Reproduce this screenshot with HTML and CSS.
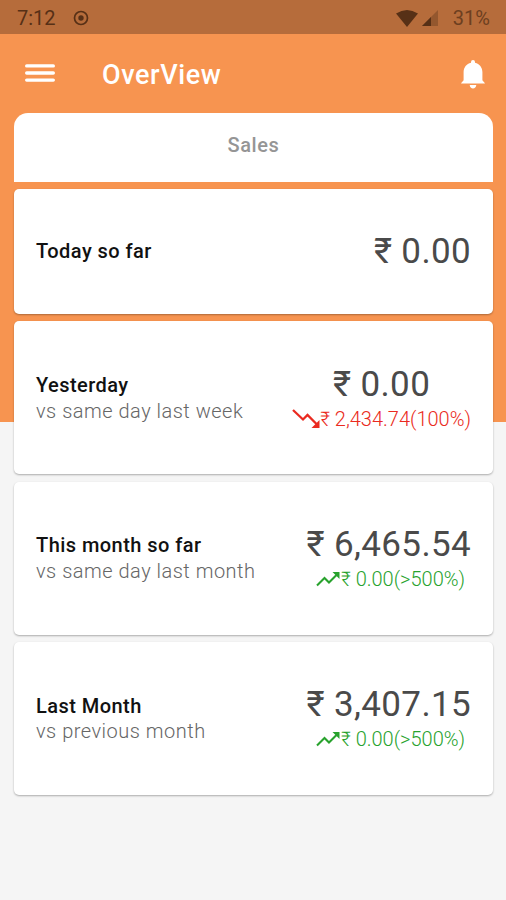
FILE: index.html
```
<!DOCTYPE html>
<html lang="en">
<head>
<meta charset="utf-8">
<title>OverView</title>
<link rel="stylesheet" href="styles.css">
</head>
<body>
<div class="screen">
  <div class="status">
    <span class="clock">7:12</span>
    <svg class="record" width="16" height="16" viewBox="0 0 16 16"><circle cx="8" cy="8" r="6.500" fill="none" stroke="currentColor" stroke-width="1.700"/><circle cx="8" cy="8" r="2.700" fill="currentColor"/></svg>
    <svg class="wifi" width="22" height="17" viewBox="0 0 22 17"><path d="M0 3.600Q11-3.400 22 3.600L11 17Z" fill="currentColor"/></svg>
    <svg class="signal" width="16" height="16" viewBox="0 0 16 16"><path d="M0 16 16 0V16Z" fill="currentColor" opacity=".35"/><path d="M0 16 9 7V16Z" fill="currentColor"/></svg>
    <span class="battery">31%</span>
  </div>
  <header class="bar">
    <svg class="menu" width="30" height="18" viewBox="0 0 30 18"><path d="M1.700 1.900H28.300M1.700 9H28.300M1.700 16.100H28.300" stroke="#fff" stroke-width="3.400" stroke-linecap="round"/></svg>
    <h1 class="title">OverView</h1>
    <svg class="bell" width="24" height="29" viewBox="0 0 24 29"><path d="M12 0a2 2 0 0 1 2 2v.7c4.500 1 7.400 4.800 7.400 9.300v8c0 1.200 2 1.900 2.600 3.500H0C.6 21.900 2.600 21.200 2.600 20V12c0-4.500 2.900-8.300 7.400-9.300V2a2 2 0 0 1 2-2ZM8.700 25h6.600c-.2 2.100-1.500 3.400-3.300 3.400S8.900 27.100 8.700 25Z" fill="#fff"/></svg>
  </header>
  <main class="content">
    <div class="tab">Sales</div>
    <section class="card short">
      <div class="label"><h2>Today so far</h2></div>
      <div class="figures"><div class="amount">₹ 0.00</div></div>
    </section>
    <section class="card">
      <div class="label"><h2>Yesterday</h2><p>vs same day last week</p></div>
      <div class="figures"><div class="amount">₹ 0.00</div>
        <div class="change down"><svg width="28" height="20" viewBox="0 0 28 20"><path d="M1 1 11 10.500 15.500 6 25 15.500" fill="none" stroke="currentColor" stroke-width="2.300"/><path d="M27.500 11V19H19.500Z" fill="currentColor"/></svg><span>₹ 2,434.74(100%)</span></div></div>
    </section>
    <section class="card">
      <div class="label"><h2>This month so far</h2><p>vs same day last month</p></div>
      <div class="figures"><div class="amount">₹ 6,465.54</div>
        <div class="change up"><svg width="24" height="15" viewBox="0 0 24 15"><path d="M1 13.500 8.500 6 13 10.500 21 2.500" fill="none" stroke="currentColor" stroke-width="2.100"/><path d="M16.500 0H23.500V7Z" fill="currentColor"/></svg><span>₹ 0.00(&gt;500%)</span></div></div>
    </section>
    <section class="card">
      <div class="label"><h2>Last Month</h2><p>vs previous month</p></div>
      <div class="figures"><div class="amount">₹ 3,407.15</div>
        <div class="change up"><svg width="24" height="15" viewBox="0 0 24 15"><path d="M1 13.500 8.500 6 13 10.500 21 2.500" fill="none" stroke="currentColor" stroke-width="2.100"/><path d="M16.500 0H23.500V7Z" fill="currentColor"/></svg><span>₹ 0.00(&gt;500%)</span></div></div>
    </section>
  </main>
</div>
</body>
</html>
```
FILE: styles.css
```
* { box-sizing: border-box; }
body {
  margin: 0;
  background: #f5f5f5;
  font-family: Roboto, "Liberation Sans", "DejaVu Sans", sans-serif;
}
.screen {
  height: 900px;
  background: linear-gradient(#f79450 422px, #f5f5f5 422px);
}
.status {
  display: flex;
  align-items: center;
  height: 34px;
  padding: 2px 16px 0 17px;
  background: #b66c3b;
  color: #573016;
  font-size: 20px;
}
.record { margin-left: 17px; }
.wifi { margin-left: auto; }
.signal { margin-left: 4px; }
.battery { margin-left: 15px; color: #6d3f20; }
.bar {
  display: flex;
  align-items: center;
  height: 79px;
  padding: 0 21px 0 25px;
}
.menu { margin-bottom: 2px; }
.title {
  margin: 3px 0 0 47px;
  color: #fff;
  font-size: 27px;
  font-weight: 500;
  letter-spacing: 0.6px;
}
.bell { margin: 2px 0 0 auto; }
.content {
  display: flex;
  flex-direction: column;
  gap: 7.300px;
  padding: 0 13px 0 14px;
}
.tab {
  height: 68.700px;
  padding-top: 20px;
  border-radius: 14px 14px 0 0;
  background: #fff;
  color: #959595;
  font-size: 20px;
  font-weight: 500;
  letter-spacing: 0.6px;
  line-height: 24px;
  text-align: center;
}
.card {
  display: flex;
  align-items: center;
  justify-content: space-between;
  height: 153px;
  padding: 0 22px;
  border-radius: 5px;
  background: #fff;
  box-shadow: 0 1px 2px rgba(0, 0, 0, 0.3);
}
.short { height: 125px; }
.label h2 {
  margin: 0;
  color: #111;
  font-size: 20px;
  font-weight: 500;
  letter-spacing: 0.45px;
  line-height: 26.500px;
}
.label p {
  margin: 0;
  color: #666;
  font-size: 20px;
  font-weight: 300;
  letter-spacing: 0.5px;
  line-height: 25px;
}
.figures {
  padding-top: 2px;
  text-align: center;
}
.amount {
  color: #4a4a4a;
  font-size: 35px;
  letter-spacing: 0.35px;
  line-height: 40px;
}
.change {
  display: flex;
  align-items: center;
  justify-content: center;
  font-size: 20px;
  font-weight: 300;
  line-height: 28px;
}
.down { color: #ea2a20; }
.up {
  gap: 1.500px;
  padding-left: 3px;
  color: #28a22d;
}
```
